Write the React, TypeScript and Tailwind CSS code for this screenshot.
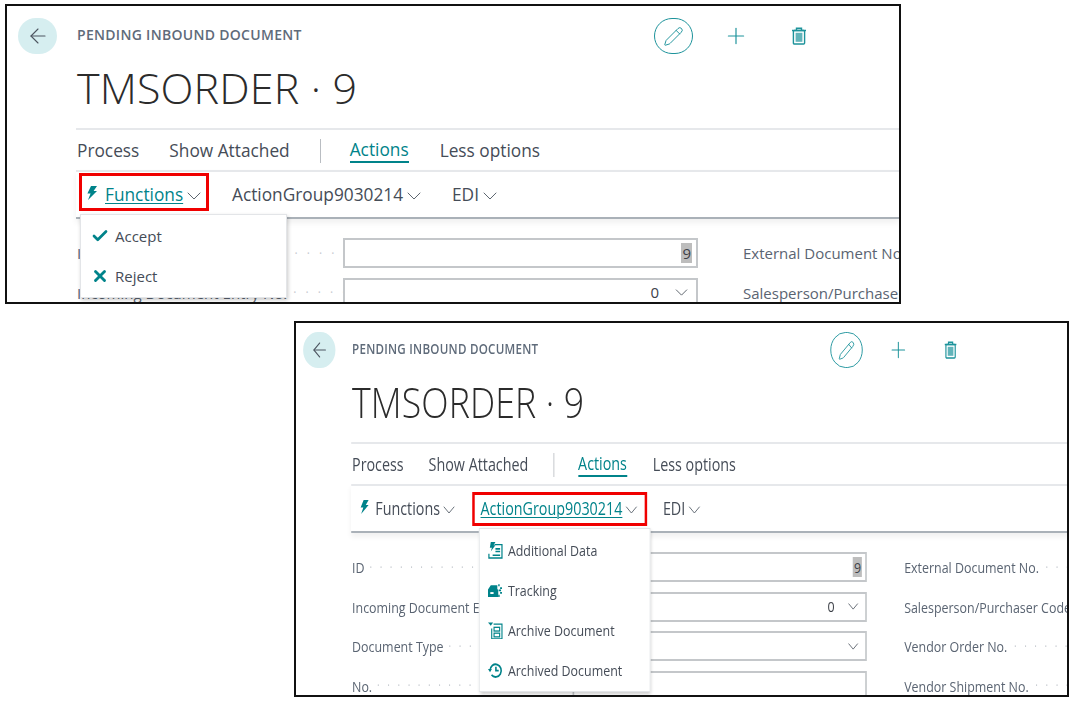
import { ArrowLeft, Check, ChevronDown, Pencil, Plus, X } from "lucide-react";
import type { ReactNode } from "react";

const FONT = "[font-family:'Open_Sans','Noto_Sans',sans-serif]";

const tabs = ["Process", "Show Attached"];

const fields = [
  { label: "ID", value: "9", selected: true, arrow: false, right: "External Document No." },
  { label: "Incoming Document Entry No.", value: "0", selected: false, arrow: true, right: "Salesperson/Purchaser Code" },
  { label: "Document Type", value: "", selected: false, arrow: true, right: "Vendor Order No." },
  { label: "No.", value: "", selected: false, arrow: false, right: "Vendor Shipment No." },
];

function Bolt({ className }: { className?: string }) {
  return (
    <svg viewBox="0 0 12 16" className={className} fill="#00838a">
      <path d="M5 1h6L7.6 6H11L2 15l2.6-6.6H1.4z" />
    </svg>
  );
}

function Trash() {
  return (
    <svg viewBox="0 0 16 18" className="w-[16px] h-[18px]" fill="none" stroke="#1d939b" strokeWidth="1.4">
      <path d="M1 3.5h14M5.5 3.5V1.2h5v2.3" />
      <rect x="2.4" y="3.5" width="11.2" height="13.5" rx="1" />
      <rect x="4.6" y="5.8" width="6.8" height="9" fill="#62b4ba" stroke="none" />
    </svg>
  );
}

function AdditionalDataIcon() {
  return (
    <svg viewBox="0 0 16 16" preserveAspectRatio="none" className="w-[19px] h-[17px]" fill="none" stroke="#00838a" strokeWidth="1.3">
      <path d="M3 0h5L6 3h2L3 9l1.2-3.5H2z" fill="#00838a" stroke="none" />
      <path d="M7 2.5h8V15H1v-4" />
      <path d="M8 6.5h5M8 9h5M5 12.5h8" strokeWidth="1.5" />
    </svg>
  );
}

function TrackingIcon() {
  return (
    <svg viewBox="0 0 16 16" preserveAspectRatio="none" className="w-[19px] h-[17px]" fill="#00838a">
      <path d="M0 7l3-4h7v3.5l1 1V14H0z" />
      <rect x="2.5" y="9.5" width="3.5" height="1.8" fill="#fff" />
      <path d="M11 2h1.5v2H11zM13 5h2v1.6h-2zM11.5 7h2.5v1.6h-2.5zM13 9.5h2v1.6h-2zM11 12h1.5v2H11z" />
    </svg>
  );
}

function ArchiveIcon() {
  return (
    <svg viewBox="0 0 16 16" preserveAspectRatio="none" className="w-[19px] h-[17px]" fill="none" stroke="#00838a" strokeWidth="1.2">
      <path d="M0 0.5h5.5L3 3.5z" fill="#00838a" stroke="none" />
      <path d="M6 2h9v14H4V6" />
      <rect x="6.5" y="5" width="6" height="3.5" />
      <rect x="6.5" y="10.5" width="6" height="3.5" />
    </svg>
  );
}

function ArchivedIcon() {
  return (
    <svg viewBox="0 0 16 16" preserveAspectRatio="none" className="w-[19px] h-[17px]" fill="none" stroke="#00838a" strokeWidth="1.7">
      <path d="M2.2 8a6 6 0 1 1 1.6 4.2" />
      <path d="M0 6.5h4.2L2.2 9.6z" fill="#00838a" stroke="none" />
      <path d="M8.5 4.5V8.2H11.5" />
    </svg>
  );
}

function MenuItem({ icon, label }: { icon: ReactNode; label: string }) {
  return (
    <div className="h-10 flex items-center pl-[10px] gap-[6px]">
      <span className="w-[18px] flex justify-center shrink-0">{icon}</span>
      <span className="text-[15px] text-[#454c57] whitespace-nowrap">{label}</span>
    </div>
  );
}

function Menu({ left, children }: { left: string; children: ReactNode }) {
  return (
    <div className={`absolute top-[42px] ${left} w-[207px] bg-white border border-[#e3e5e8] shadow-[1px_2px_4px_rgba(0,0,0,0.22)] py-px z-10`}>
      {children}
    </div>
  );
}

function BarButton({ active, bolt, label, boxed, box }: { active: boolean; bolt?: boolean; label: string; boxed: boolean; box: string }) {
  return (
    <div className={`${box} flex items-center border-[3px] ${boxed ? "border-[#f00000]" : "border-transparent"}`}>
      {bolt && <Bolt className="w-[12px] h-[16px] mr-[7px] mb-[3px] shrink-0" />}
      <span className={`text-[17.3px] pt-px whitespace-nowrap ${active ? "text-[#00838a] underline underline-offset-2 decoration-1" : "text-[#454c57]"}`}>
        {label}
      </span>
      <ChevronDown size={24} strokeWidth={1} className="-ml-[1px] mt-[2px] shrink-0 text-[#5d6670]" />
    </div>
  );
}

function FieldRow({ field }: { field: (typeof fields)[number] }) {
  return (
    <div className="flex h-[39.6px] items-start">
      <div className="w-[267px] h-[30px] pt-px pl-px flex items-center gap-[6px] overflow-hidden shrink-0">
        <span className="text-[15px] text-[#5a6472] whitespace-nowrap">{field.label}</span>
        <span className="text-[12px] tracking-[3px] text-[#c6cad0] whitespace-nowrap">· · · · · · · · · · · · · · · · · · · · · · · ·</span>
      </div>
      <div className="w-[355px] h-[30px] shrink-0 border-2 border-[#c4c7ca] flex items-center justify-end pr-[4px] text-[15px] text-[#3d4148]">
        {field.selected && <span className="bg-[#bdbdbd] px-[1px] leading-[20px]">{field.value}</span>}
        {!field.selected && <span>{field.value}</span>}
        {field.arrow && <ChevronDown size={21} strokeWidth={1} className="ml-[12px] text-[#4a525c]" />}
      </div>
      <div className="ml-[45px] flex-1 h-[30px] pt-px flex items-center gap-[8px] overflow-hidden min-w-0">
        <span className="text-[15px] text-[#5a6472] whitespace-nowrap">{field.right}</span>
        <span className="text-[12px] tracking-[3px] text-[#c6cad0] whitespace-nowrap">· · · · · · · · · · · · · · · ·</span>
      </div>
    </div>
  );
}

function DocumentPage({ open }: { open: "functions" | "group" }) {
  const isFunctions = open === "functions";
  return (
    <div className="flex">
      <div className="w-[69px] shrink-0 pt-[12px] pl-[11px]">
        <div className="w-[39px] h-[36px] rounded-full bg-[#d6eef0] flex items-center justify-center">
          <ArrowLeft size={24} strokeWidth={1.1} className="text-[#4d5560]" />
        </div>
      </div>
      <div className="flex-1 min-w-0">
        <div className="h-[60px] flex items-start pt-[12px] pl-px relative">
          <div className="text-[14px] font-semibold tracking-[0.3px] text-[#5f6b7a] leading-[34px] h-[36px] whitespace-nowrap">
            PENDING INBOUND DOCUMENT
          </div>
          <div className="absolute left-[578px] top-[12px] w-[39px] h-[36px] rounded-full border border-[#1d939b] flex items-center justify-center">
            <Pencil size={21} strokeWidth={1.1} className="text-[#1d939b]" />
          </div>
          <Plus size={26} strokeWidth={1.1} className="absolute left-[647px] top-[17px] text-[#1d939b]" />
          <div className="absolute left-[715px] top-[21px]"><Trash /></div>
        </div>
        <div className="h-[62px] pl-px text-[43px] tracking-[0.15px] font-light leading-[44px] text-[#2b2b2b] whitespace-nowrap">TMSORDER · 9</div>
        <div className="h-[42px] pt-[2px] border-t-2 border-[#e6e8eb] flex items-center pl-[1px] text-[17.3px] text-[#454c57]">
          {tabs.map((t) => (
            <span key={t} className="mr-[30px] whitespace-nowrap">{t}</span>
          ))}
          <span className="w-px h-[24px] bg-[#b9bdc2] mr-[29px]" />
          <span className="mr-[31px] text-[#00838a] border-b-2 border-[#00838a] leading-[22px] whitespace-nowrap">Actions</span>
          <span className="whitespace-nowrap">Less options</span>
        </div>
        <div className="relative h-[49px] border-t-2 border-b-2 border-t-[#e6e8eb] border-b-[#aab1b8] shadow-[0_4px_6px_rgba(0,0,0,0.06)] flex items-center">
          <div className="ml-[3px] flex items-center">
            <BarButton active={isFunctions} bolt label="Functions" boxed={isFunctions} box={`w-[130px] pl-[4px] ${isFunctions ? "h-[38px] mb-[5px] pt-[5px]" : "h-[34px]"}`} />
            <div className="w-[13px]" />
            <BarButton active={!isFunctions} label="ActionGroup9030214" boxed={!isFunctions} box="w-[211px] h-[34px] pl-[7px]" />
            <BarButton active={false} label="EDI" boxed={false} box="w-[80px] h-[34px] pl-[16px]" />
          </div>
          {isFunctions ? (
            <Menu left="left-[4px]">
              <MenuItem icon={<Check size={22} strokeWidth={3.6} className="text-[#00838a]" />} label="Accept" />
              <MenuItem icon={<X size={22} strokeWidth={3.8} className="text-[#00838a]" />} label="Reject" />
            </Menu>
          ) : (
            <Menu left="left-[154px]">
              <MenuItem icon={<AdditionalDataIcon />} label="Additional Data" />
              <MenuItem icon={<TrackingIcon />} label="Tracking" />
              <MenuItem icon={<ArchiveIcon />} label="Archive Document" />
              <MenuItem icon={<ArchivedIcon />} label="Archived Document" />
            </Menu>
          )}
        </div>
        <div className="pt-[19px]">
          {fields.map((f) => (
            <FieldRow key={f.label} field={f} />
          ))}
        </div>
      </div>
    </div>
  );
}

export default function App() {
  return (
    <div className={`w-[1077px] h-[706px] bg-white overflow-hidden pt-[4px] ${FONT}`}>
      <div className="ml-[5px] w-[896px] h-[300px] border-2 border-[#111] overflow-hidden">
        <DocumentPage open="functions" />
      </div>
      <div className="ml-[294px] mt-[17px] w-[775px] h-[376px] border-2 border-[#111] overflow-hidden">
        <div className="-ml-[2.5px] -mt-[3px] w-[936px] origin-top-left scale-x-[.829]">
          <DocumentPage open="group" />
        </div>
      </div>
    </div>
  );
}
